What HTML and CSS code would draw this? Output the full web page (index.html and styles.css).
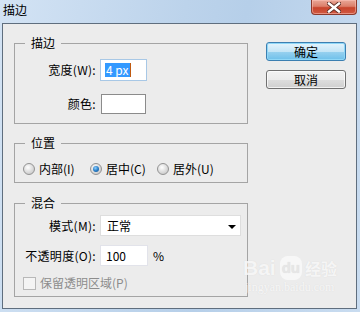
FILE: index.html
```html
<!DOCTYPE html>
<html lang="zh-CN">
<head>
  <meta charset="UTF-8" />
  <meta name="viewport" content="width=device-width, initial-scale=1.0" />
  <title>描边</title>
  <link rel="stylesheet" href="styles.css">
</head>
<body>
  <div class="window">
    <div class="titlebar">
      <span class="title">描边</span>
      <span class="close">
        <svg width="14" height="11" viewBox="0 0 14 11">
          <path d="M2 1.5 L12 9.5 M12 1.5 L2 9.5" stroke="#5a2a22" stroke-width="4.2" stroke-linecap="square" fill="none"/>
          <path d="M2 1.5 L12 9.5 M12 1.5 L2 9.5" stroke="#ffffff" stroke-width="2.4" stroke-linecap="square" fill="none"/>
        </svg>
      </span>
    </div>

    <div class="client">
      <div class="groups">
        <fieldset class="group stroke">
          <legend>描边</legend>
          <div class="form-grid">
            <label class="lbl">宽度(W):</label>
            <div class="field width-field"><span class="selected">4 px</span></div>
            <label class="lbl">颜色:</label>
            <div class="swatch"></div>
          </div>
        </fieldset>

        <fieldset class="group position">
          <legend>位置</legend>
          <div class="radios">
            <span class="radio-item"><span class="radio"></span>内部(I)</span>
            <span class="radio-item"><span class="radio checked"></span>居中(C)</span>
            <span class="radio-item"><span class="radio"></span>居外(U)</span>
          </div>
        </fieldset>

        <fieldset class="group blend">
          <legend>混合</legend>
          <div class="form-grid blend-grid">
            <label class="lbl">模式(M):</label>
            <div class="select">正常<span class="arrow"></span></div>
            <label class="lbl">不透明度(O):</label>
            <div class="opacity-row">
              <div class="field opacity-field">100</div>
              <span class="unit">%</span>
            </div>
          </div>
          <div class="check-row">
            <span class="checkbox"></span>保留透明区域(P)
          </div>
        </fieldset>
      </div>

      <div class="buttons">
        <button class="btn default">确定</button>
        <button class="btn">取消</button>
      </div>
    </div>

    <div class="watermark">
      <div class="wm-logo">Bai<span class="paw">du</span><span class="wm-cn">经验</span></div>
      <div class="wm-url">jingyan.baidu.com</div>
    </div>
  </div>
</body>
</html>
```

FILE: styles.css
```css
body {
  margin: 0;
  padding: 0;
  font-family: "Noto Sans CJK SC", "Microsoft YaHei", sans-serif;
  font-size: 12px;
  color: #000;
}

.window {
  position: relative;
  width: 360px;
  height: 312px;
  box-sizing: border-box;
  padding: 0 3px 3px 2px;
  background: linear-gradient(100deg, #d3e3f4 0%, #bcd3eb 45%, #b6cfe9 60%, #c9dcf0 100%);
  overflow: hidden;
}

.titlebar {
  height: 23px;
  display: flex;
  justify-content: space-between;
  align-items: flex-start;
}

.title {
  padding: 3px 0 0 1px;
  line-height: 14px;
  font-size: 12px;
}

.close {
  width: 46px;
  height: 15px;
  margin-right: 0;
  display: flex;
  align-items: center;
  justify-content: center;
  box-sizing: border-box;
  border: 1px solid #8c3a2c;
  border-top: none;
  border-radius: 0 0 4px 4px;
  background: linear-gradient(#e9a898 0%, #dc7f6a 45%, #c8442c 55%, #d05a42 100%);
  box-shadow: inset 0 0 0 1px rgba(255, 200, 190, 0.5);
}

.client {
  height: 286px;
  box-sizing: border-box;
  border: 1px solid #5f6e7e;
  background: #ececec;
  padding: 12px 10px 11px 11px;
  display: flex;
  align-items: flex-start;
  gap: 18px;
}

.groups {
  width: 234px;
}

.group {
  margin: 0;
  padding: 0;
  border: 1px solid #a4a4a4;
  min-width: 0;
}

.group legend {
  margin-left: 10px;
  padding: 0 6px;
  line-height: 14px;
  height: 14px;
}

.position {
  margin-top: 12px;
}

.blend {
  margin-top: 13px;
}

.form-grid {
  display: grid;
  grid-template-columns: 81px auto;
  column-gap: 4px;
  row-gap: 13px;
  padding: 9px 0 9px 0;
  align-items: center;
  justify-items: start;
}

.lbl {
  justify-self: end;
  line-height: 14px;
  letter-spacing: 0.3px;
}

.field {
  box-sizing: border-box;
  height: 22px;
  width: 47px;
  background: #fff;
  border: 1px solid #e2e3ea;
  padding: 3px 0 0 4px;
  line-height: 14px;
}

.width-field {
  border-color: #a8c8e6;
}

.selected {
  display: inline-block;
  background: #3399ff;
  color: #fff;
  padding: 0 1px;
  border-right: 1px solid #c05a10;
  line-height: 14px;
}

.swatch {
  box-sizing: border-box;
  margin-left: 1px;
  width: 45px;
  height: 20px;
  background: #fff;
  border: 1px solid #8b8b8b;
}

.radios {
  display: flex;
  padding: 12px 0 6px 8px;
  line-height: 14px;
}

.radio-item {
  width: 67px;
  display: flex;
  align-items: center;
  gap: 4px;
}

.radio {
  width: 12px;
  height: 12px;
  box-sizing: border-box;
  border-radius: 50%;
  border: 1px solid #939393;
  background: radial-gradient(circle at 40% 35%, #ffffff 0%, #e4e4e4 40%, #bdbdbd 100%);
  display: flex;
  align-items: center;
  justify-content: center;
}

.radio.checked::after {
  content: "";
  width: 6px;
  height: 6px;
  border-radius: 50%;
  background: radial-gradient(circle at 40% 35%, #8fd0ff 0%, #2a7fc8 50%, #0f4d8a 100%);
}

.blend-grid {
  padding: 5px 0 0 0;
  row-gap: 9px;
}

.select {
  position: relative;
  box-sizing: border-box;
  width: 141px;
  height: 21px;
  background: #fff;
  border: 1px solid #dedede;
  padding: 3px 0 0 6px;
  line-height: 14px;
}

.arrow {
  position: absolute;
  right: 4px;
  top: 9px;
  width: 0;
  height: 0;
  border-left: 4px solid transparent;
  border-right: 4px solid transparent;
  border-top: 4px solid #000;
}

.opacity-row {
  display: flex;
  align-items: center;
  gap: 5px;
}

.opacity-field {
  height: 21px;
  width: 48px;
  padding-left: 5px;
}

.unit {
  line-height: 14px;
}

.check-row {
  display: flex;
  align-items: center;
  gap: 4px;
  padding: 10px 0 6px 8px;
  line-height: 14px;
  color: #8d8d8d;
}

.checkbox {
  width: 13px;
  height: 13px;
  box-sizing: border-box;
  border: 1px solid #b8b8b8;
  background: #f4f4f4;
}

.buttons {
  display: flex;
  flex-direction: column;
  gap: 9px;
  padding-top: 6px;
}

.btn {
  width: 80px;
  height: 19px;
  padding: 0;
  font-family: inherit;
  font-size: 12px;
  line-height: 14px;
  color: #000;
  border-radius: 3px;
  border: 1px solid #707070;
  background: linear-gradient(#f2f2f2 0%, #ebebeb 50%, #dddddd 51%, #cfcfcf 100%);
  box-shadow: inset 0 0 0 1px rgba(255, 255, 255, 0.7);
}

.btn.default {
  border-color: #3c7fb1;
  background: linear-gradient(#e5f4fc 0%, #c4e5f6 50%, #98d1ef 51%, #6dc0ea 100%);
  box-shadow: inset 0 0 0 1px #8fd7f7;
}

.watermark {
  position: absolute;
  left: 243px;
  top: 256px;
  color: rgba(255, 255, 255, 0.75);
  text-shadow: 0 0 1px rgba(190, 190, 190, 0.45);
  font-family: "Liberation Sans", sans-serif;
}

.wm-logo {
  font-size: 21px;
  font-weight: bold;
  line-height: 24px;
  display: flex;
  align-items: center;
}

.paw {
  margin-left: 4px;
  padding: 0 2px;
  font-size: 15px;
  border-radius: 8px;
  background: rgba(255, 255, 255, 0.6);
  color: #e6e6e6;
}

.wm-cn {
  margin-left: 3px;
  font-family: "Noto Sans CJK SC", sans-serif;
  font-size: 16px;
}

.wm-url {
  font-family: "Liberation Serif", serif;
  font-size: 12px;
  line-height: 14px;
  margin-left: 2px;
}
```
